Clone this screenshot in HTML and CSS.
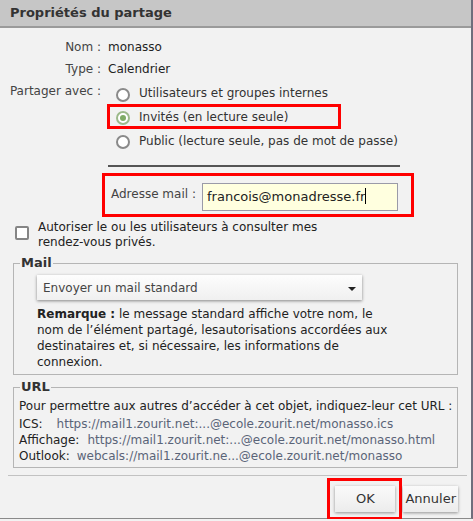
FILE: index.html
```html
<!DOCTYPE html>
<html lang="fr">
<head>
    <meta charset="UTF-8">
    <title>Propriétés du partage</title>
    <link rel="stylesheet" href="styles.css">
</head>
<body>
    <div class="dialog">
        <div class="titlebar">Propriétés du partage</div>

        <div class="content">
            <div class="props">
                <div class="label">Nom :</div>
                <div class="value">monasso</div>

                <div class="label">Type :</div>
                <div class="value">Calendrier</div>

                <div class="label">Partager avec :</div>
                <div class="radios">
                    <label class="radio-row first">
                        <span class="radio"></span>
                        Utilisateurs et groupes internes
                    </label>
                    <label class="radio-row highlight">
                        <span class="radio checked"></span>
                        Invités (en lecture seule)
                    </label>
                    <label class="radio-row">
                        <span class="radio"></span>
                        Public (lecture seule, pas de mot de passe)
                    </label>
                    <div class="rule"></div>
                </div>
            </div>

            <div class="email-box">
                <span class="email-label">Adresse mail :</span>
                <div class="email-input">francois@monadresse.fr<span class="caret"></span></div>
            </div>

            <label class="check-row">
                <span class="checkbox"></span>
                <span class="check-text">Autoriser le ou les utilisateurs à consulter mes rendez-vous privés.</span>
            </label>

            <fieldset class="group group-mail">
                <legend>Mail</legend>
                <div class="group-body mail-body">
                    <div class="select">
                        <span>Envoyer un mail standard</span>
                        <span class="arrow"></span>
                    </div>
                    <p class="note"><strong>Remarque :</strong> le message standard affiche votre nom, le nom de l’élément partagé, lesautorisations accordées aux destinataires et, si nécessaire, les informations de connexion.</p>
                </div>
            </fieldset>

            <fieldset class="group group-url">
                <legend>URL</legend>
                <div class="group-body url-body">
                    <p class="url-intro">Pour permettre aux autres d’accéder à cet objet, indiquez-leur cet URL :</p>
                    <div class="url-line"><span class="url-key key-ics">ICS:</span><span class="url-link">https://mail1.zourit.net:...@ecole.zourit.net/monasso.ics</span></div>
                    <div class="url-line"><span class="url-key key-html">Affichage:</span><span class="url-link">https://mail1.zourit.net:...@ecole.zourit.net/monasso.html</span></div>
                    <div class="url-line"><span class="url-key key-outlook">Outlook:</span><span class="url-link">webcals://mail1.zourit.ne...@ecole.zourit.net/monasso</span></div>
                </div>
            </fieldset>
        </div>

        <div class="footer">
            <div class="highlight-btn">
                <button class="button ok">OK</button>
            </div>
            <button class="button">Annuler</button>
        </div>
    </div>
</body>
</html>
```

FILE: styles.css
```css
* {
    margin: 0;
    padding: 0;
    box-sizing: border-box;
}

body {
    font-family: "DejaVu Sans", sans-serif;
    font-size: 12px;
    color: #333;
    background-color: #f2f2f2;
}

.dialog {
    width: 473px;
    height: 519px;
    background-color: #f2f2f2;
    border-right: 2px solid #6f6e7c;
    border-bottom: 1px solid #8a8a8a;
}

.titlebar {
    height: 28px;
    line-height: 26px;
    padding-left: 10px;
    background-color: #c6c6c6;
    border-bottom: 2px solid #9a9a9a;
    font-size: 13px;
    font-weight: bold;
    color: #333;
}

.content {
    padding: 10px 0 0 0;
}

/* Properties grid */
.props {
    display: grid;
    grid-template-columns: 101px 1fr;
    column-gap: 6px;
    row-gap: 4px;
    line-height: 18px;
}

.label {
    text-align: right;
    color: #444;
    white-space: nowrap;
}

.value {
    padding-left: 1px;
    color: #222;
}

.radios {
    display: flex;
    flex-direction: column;
}

.radio-row {
    display: flex;
    align-items: center;
    gap: 9px;
    width: 234px;
    height: 23px;
    padding-left: 6px;
    border: 3px solid transparent;
    white-space: nowrap;
    color: #333;
}

.radio-row.first {
    height: 22px;
}

.radio-row.highlight {
    border-color: #ff0000;
    height: 25px;
}

.radio {
    width: 14px;
    height: 14px;
    border: 2px solid #8a8a8a;
    border-radius: 50%;
    background-color: #fff;
    margin-top: 3px;
    flex-shrink: 0;
    position: relative;
}

.radio.checked {
    border-color: #9cb98a;
}

.radio.checked::after {
    content: "";
    position: absolute;
    left: 2px;
    top: 2px;
    width: 6px;
    height: 6px;
    border-radius: 50%;
    background-color: #7fab66;
}

.rule {
    width: 292px;
    height: 2px;
    margin: 13px 0 0 1px;
    background-color: #555;
}

/* Email */
.email-box {
    display: flex;
    align-items: center;
    width: 312px;
    height: 44px;
    margin: 6px 0 0 102px;
    padding: 0 0 0 6px;
    border: 3px solid #ff0000;
}

.email-label {
    width: 91px;
    color: #444;
    margin-top: -3px;
}

.email-input {
    width: 196px;
    height: 28px;
    margin-top: 4px;
    padding: 0 4px;
    line-height: 26px;
    font-size: 13px;
    background-color: #ffffdf;
    border: 1px solid #9a9aa8;
    color: #222;
}

.caret {
    display: inline-block;
    width: 1px;
    height: 16px;
    background-color: #000;
    vertical-align: -3px;
}

/* Checkbox */
.check-row {
    display: flex;
    gap: 9px;
    margin: 3px 0 0 15px;
    line-height: 15px;
}

.checkbox {
    width: 14px;
    height: 14px;
    margin-top: 6px;
    border: 2px solid #858585;
    border-radius: 2px;
    background-color: #fff;
    flex-shrink: 0;
}

.check-text {
    width: 320px;
    color: #222;
}

/* Fieldsets */
.group {
    width: 445px;
    margin-left: 13px;
    border: 1px solid #b5b5b5;
    padding: 0;
}

.group legend {
    margin-left: 6px;
    padding: 0 1px;
    font-weight: bold;
    font-size: 13px;
    line-height: 16px;
    color: #333;
}

.group-mail {
    margin-top: 5px;
    height: 120px;
}

.mail-body {
    padding: 4px 0 0 23px;
}

.select {
    display: flex;
    align-items: center;
    justify-content: space-between;
    width: 325px;
    height: 25px;
    padding: 0 6px;
    background: linear-gradient(#fdfdfd, #f0f0f0);
    box-shadow: 0 1px 3px rgba(0, 0, 0, 0.45);
    color: #444;
    font-size: 12px;
}

.arrow {
    width: 0;
    height: 0;
    margin-top: 2px;
    border-left: 4px solid transparent;
    border-right: 4px solid transparent;
    border-top: 4px solid #222;
}

.note {
    width: 355px;
    margin-top: 6px;
    line-height: 16px;
    color: #222;
}

.group-url {
    margin-top: 4px;
    height: 89px;
}

.url-body {
    padding: 3px 0 0 5px;
}

.url-intro {
    line-height: 17px;
    color: #222;
    white-space: nowrap;
}

.url-line {
    line-height: 16px;
    white-space: nowrap;
    color: #222;
}

.url-intro + .url-line {
    margin-top: 1px;
}

.url-key {
    display: inline-block;
}

.key-ics {
    margin-right: 14px;
}

.key-html {
    margin-right: 8px;
}

.key-outlook {
    margin-right: 7px;
}

.url-link {
    color: #5a6478;
}

/* Footer */
.footer {
    display: flex;
    justify-content: flex-end;
    align-items: center;
    gap: 1px;
    margin: 7px 4px 0 8px;
    padding-right: 9px;
    border-top: 1px solid #c2c2c2;
    height: 46px;
}

.highlight-btn {
    border: 3px solid #ff0000;
    padding: 5px 4px 5px 5px;
}

.button {
    height: 26px;
    padding: 0 2px;
    font-family: "DejaVu Sans", sans-serif;
    font-size: 13px;
    color: #333;
    border: none;
    background: linear-gradient(#fafafa, #ececec);
    box-shadow: 0 1px 3px rgba(0, 0, 0, 0.4);
}

.button.ok {
    width: 60px;
}
```
